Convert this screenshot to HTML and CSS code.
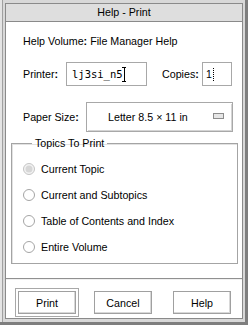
FILE: index.html
```html
<!DOCTYPE html>
<html lang="en">
<head>
  <meta charset="UTF-8" />
  <title>Help - Print</title>
  <link rel="stylesheet" href="styles.css">
</head>
<body>
<div class="window">
  <div class="inner">
    <div class="titlebar">Help - Print</div>

    <div class="content">
      <div class="volume">Help Volume<b>:</b> File Manager Help</div>

      <div class="row printer-row">
        <span class="label printer-label">Printer<b>:</b></span>
        <div class="field printer-field">lj3si_n5<span class="caret"></span></div>
        <span class="label copies-label">Copies<b>:</b></span>
        <div class="field copies-field">1<span class="caret dotted"></span></div>
      </div>

      <div class="row paper-row">
        <span class="label paper-label">Paper Size<b>:</b></span>
        <div class="option">
          <span class="option-text">Letter 8.5 × 11 in</span>
          <span class="indicator"></span>
        </div>
      </div>

      <fieldset class="topics">
        <legend>Topics To Print</legend>
        <div class="radio disabled">
          <svg width="12" height="12" viewBox="0 0 12 12"><circle cx="6" cy="6" r="5.5" fill="#f2f2f2" stroke="#c4c4c4"/><circle cx="6" cy="6" r="3.5" fill="#d6d6d6"/></svg>
          <span>Current Topic</span>
        </div>
        <div class="radio">
          <svg width="12" height="12" viewBox="0 0 12 12"><circle cx="6" cy="6" r="5.5" fill="#fff" stroke="#a4a4a4"/></svg>
          <span>Current and Subtopics</span>
        </div>
        <div class="radio">
          <svg width="12" height="12" viewBox="0 0 12 12"><circle cx="6" cy="6" r="5.5" fill="#fff" stroke="#a4a4a4"/></svg>
          <span>Table of Contents and Index</span>
        </div>
        <div class="radio">
          <svg width="12" height="12" viewBox="0 0 12 12"><circle cx="6" cy="6" r="5.5" fill="#fff" stroke="#a4a4a4"/></svg>
          <span>Entire Volume</span>
        </div>
      </fieldset>

      <div class="separator"></div>

      <div class="buttons">
        <button class="btn default">Print</button>
        <button class="btn cancel">Cancel</button>
        <button class="btn help">Help</button>
      </div>
    </div>
  </div>
</div>
</body>
</html>
```

FILE: styles.css
```css
body {
  margin: 0;
  font-family: 'Liberation Sans', Arial, sans-serif;
  font-size: 10.7px;
  color: #000;
  background: #fff;
}

.window {
  width: 248px;
  height: 325px;
  box-sizing: border-box;
  background: #d8d8d8;
  padding: 3px 2px 3px 5px;
  border-right: 3px solid #7e7e7e;
  border-bottom: 3px solid #7e7e7e;
  box-shadow: inset 2px 0 0 #e4e4e4, inset 3px 0 0 #a0a0a0;
}

.inner {
  height: 100%;
  box-sizing: border-box;
  border: 1px solid #8a8a8a;
  display: flex;
  flex-direction: column;
  background: #fff;
}

.titlebar {
  height: 17px;
  line-height: 17px;
  text-align: center;
  background: #dedede;
  border-bottom: 1px solid #8a8a8a;
}

.content {
  flex: 1;
  display: flex;
  flex-direction: column;
  padding: 0 0 0 17px;
  background: #fff;
}

.volume {
  margin-top: 13px;
  line-height: 13px;
}

.row {
  display: flex;
  align-items: center;
}

.label b {
  font-weight: bold;
}

.printer-row {
  margin-top: 14px;
  height: 24px;
}

.printer-label {
  width: 43px;
}

.copies-label {
  width: 40px;
  margin-left: 15px;
}

.field {
  height: 24px;
  box-sizing: border-box;
  border: 1px solid #a8a8a8;
  display: flex;
  align-items: center;
  font-family: 'DejaVu Sans Mono', 'Liberation Mono', monospace;
  font-size: 10.5px;
}

.printer-field {
  width: 81px;
  padding-left: 5px;
}

.copies-field {
  width: 30px;
  padding-left: 3px;
  font-family: 'Liberation Sans', Arial, sans-serif;
}

.caret {
  display: inline-block;
  width: 5px;
  height: 15px;
  margin-left: -1px;
  background:
    linear-gradient(#000, #000) center / 1px 100% no-repeat,
    linear-gradient(#000, #000) top / 4px 1px no-repeat,
    linear-gradient(#000, #000) bottom / 4px 1px no-repeat;
}

.caret.dotted {
  width: 3px;
  height: 13px;
  margin-left: 0;
  background:
    repeating-linear-gradient(#000 0 1px, transparent 1px 2px) center / 1px 100% no-repeat;
}

.paper-row {
  margin-top: 16px;
  height: 30px;
}

.paper-label {
  width: 63px;
}

.option {
  width: 147px;
  height: 30px;
  box-sizing: border-box;
  border: 1px solid #a8a8a8;
  box-shadow: inset 1px 1px 0 #fff, inset -1px -1px 0 #d4d4d4;
  display: flex;
  align-items: center;
  padding-left: 21px;
}

.option-text {
  flex: 1;
}

.indicator {
  width: 9px;
  height: 4px;
  border: 1px solid #8c8c8c;
  background: #e6e6e6;
  margin-right: 8px;
  margin-bottom: 3px;
}

.topics {
  margin: 5px 0 0 -12px;
  width: 227px;
  box-sizing: border-box;
  padding: 7px 0 3px 11px;
  border: 1px solid #a4a4a4;
  box-shadow: inset 1px 1px 0 #e2e2e2;
}

.topics legend {
  margin-left: 9px;
  padding: 0 3px;
  line-height: 12px;
}

.radio {
  height: 26px;
  display: flex;
  align-items: center;
}

.radio svg {
  margin-right: 6px;
}

.separator {
  margin: 14px 0 0 -17px;
  height: 1px;
  background: #909090;
  border-bottom: 1px solid #f0f0f0;
}

.buttons {
  margin-top: 11px;
  display: flex;
}

.btn {
  width: 58px;
  height: 23px;
  padding: 0;
  font-family: inherit;
  font-size: inherit;
  color: #000;
  background: #fff;
  border: 1px solid #a0a0a0;
  box-shadow: inset -1px -1px 0 #d8d8d8;
}

.btn.default {
  margin-left: -5px;
  outline: 1px solid #a8a8a8;
  outline-offset: 2px;
}

.btn.cancel {
  margin-left: 18px;
}

.btn.help {
  margin-left: 21px;
}
```
